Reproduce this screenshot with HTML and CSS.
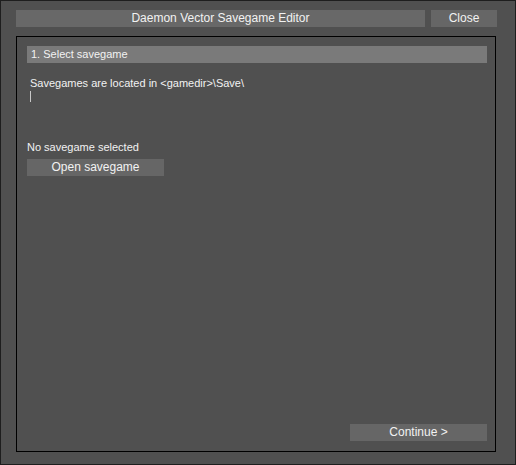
FILE: index.html
```html
<!DOCTYPE html>
<html>
<head>
<meta charset="utf-8">
<link rel="stylesheet" href="styles.css">
</head>
<body>
<div class="window">
  <div class="titlerow">
    <div class="titlebar">Daemon Vector Savegame Editor</div>
    <div class="btn close">Close</div>
  </div>
  <div class="panel">
    <div class="section-header">1. Select savegame</div>
    <div class="info">Savegames are located in &lt;gamedir&gt;\Save\</div>
    <div class="cursor"></div>
    <div class="status">No savegame selected</div>
    <div class="btn open">Open savegame</div>
    <div class="spacer"></div>
    <div class="footer">
      <div class="btn continue">Continue &gt;</div>
    </div>
  </div>
</div>
</body>
</html>
```

FILE: styles.css
```css
* { box-sizing: border-box; }
html, body { margin: 0; padding: 0; background: #505050; }
body {
  font-family: "Liberation Sans", Arial, sans-serif;
  font-size: 11px;
  color: #f2f2f2;
}
.window {
  width: 516px;
  height: 465px;
  border: 1px solid #1e1e1e;
  background: #505050;
  padding: 9px 0 0 15px;
  display: flex;
  flex-direction: column;
}
.titlerow {
  display: flex;
  gap: 6px;
  height: 17px;
}
.titlebar {
  width: 409px;
  background: #686868;
  text-align: center;
  line-height: 17px;
  font-size: 12px;
}
.btn {
  background: #666666;
  text-align: center;
  line-height: 17px;
  height: 17px;
  font-size: 12px;
}
.close { width: 66px; }
.panel {
  margin-top: 9px;
  width: 480px;
  height: 416px;
  border: 1px solid #000;
  padding: 9px 8px 10px 10px;
  display: flex;
  flex-direction: column;
}
.section-header {
  height: 17px;
  background: #7a7a7a;
  line-height: 17px;
  padding-left: 4px;
}
.info {
  margin-top: 13px;
  padding-left: 3px;
  line-height: 14px;
}
.cursor {
  margin-left: 3px;
  margin-top: 1px;
  width: 1px;
  height: 11px;
  background: #c8c8c8;
}
.status {
  margin-top: 38px;
  line-height: 14px;
}
.open {
  margin-top: 5px;
  width: 137px;
}
.spacer { flex: 1; }
.footer {
  display: flex;
  justify-content: flex-end;
}
.continue { width: 137px; }
```
